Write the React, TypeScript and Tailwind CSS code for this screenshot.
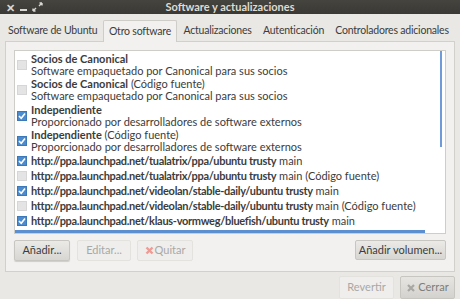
import React from "react";

const rows2 = [
  { b: "Socios de Canonical", r: "", sub: "Software empaquetado por Canonical para sus socios", c: false },
  { b: "Socios de Canonical", r: " (Código fuente)", sub: "Software empaquetado por Canonical para sus socios", c: false },
  { b: "Independiente", r: "", sub: "Proporcionado por desarrolladores de software externos", c: true },
  { b: "Independiente", r: " (Código fuente)", sub: "Proporcionado por desarrolladores de software externos", c: true },
];
const rows1 = [
  { b: "http://ppa.launchpad.net/tualatrix/ppa/ubuntu trusty", r: " main", c: true },
  { b: "http://ppa.launchpad.net/tualatrix/ppa/ubuntu trusty", r: " main (Código fuente)", c: false },
  { b: "http://ppa.launchpad.net/videolan/stable-daily/ubuntu trusty", r: " main", c: true },
  { b: "http://ppa.launchpad.net/videolan/stable-daily/ubuntu trusty", r: " main (Código fuente)", c: false },
  { b: "http://ppa.launchpad.net/klaus-vormweg/bluefish/ubuntu trusty", r: " main", c: true },
];

function Check({ c }: { c: boolean }) {
  if (!c)
    return <div className="w-[10px] h-[10px] shrink-0 bg-[#e4e4e4] border border-[#d6d6d6]" />;
  return (
    <div className="w-[10px] h-[10px] shrink-0 bg-[#4a8ccf] border border-[#3c78b8] flex items-center justify-center">
      <svg width="8" height="8" viewBox="0 0 8 8">
        <path d="M1 4 L3.2 6.2 L7 1.5" stroke="white" strokeWidth="1.6" fill="none" />
      </svg>
    </div>
  );
}

export default function App() {
  return (
    <div
      className="w-[460px] h-[299px] bg-[#e9e8e4] flex flex-col overflow-hidden text-[11px] text-[#3c3c3c] whitespace-nowrap"
      style={{ fontFamily: 'Lato, "Open Sans", sans-serif' }}
    >
      <div className="h-[14px] bg-gradient-to-b from-[#45443f] to-[#3a3935] flex items-center relative shrink-0">
        <div className="flex items-center gap-[5px] pl-[6px] text-[#d8d7d3] relative z-10">
          <span className="text-[11px] font-bold leading-none">✕</span>
          <span className="w-[7px] h-[2px] bg-[#d8d7d3] mt-[5px]" />
          <svg width="11" height="10" viewBox="0 0 11 10">
            <path d="M1 9 L4 6 M1 9 L1 6.5 M1 9 L3.5 9 M10 1 L7 4 M10 1 L7.5 1 M10 1 L10 3.5" stroke="#d8d7d3" strokeWidth="1.4" fill="none" />
          </svg>
        </div>
        <div className="absolute left-0 right-0 text-center font-bold text-[11px] leading-[14px] text-[#dfdbd2]">
          Software y actualizaciones
        </div>
      </div>
      <div className="flex items-end h-[27px] pl-[5px] pt-[6px] shrink-0 text-[10.5px] tracking-[-0.2px]">
        <div className="w-[98px] pl-[3px] h-[21px] flex items-center">Software de Ubuntu</div>
        <div className="w-[74px] h-[22px] flex items-center justify-center bg-[#f2f1ef] border border-[#cfcdc8] border-b-0 rounded-t-[2px] relative top-[1px]">
          Otro software
        </div>
        <div className="w-[81px] h-[21px] flex items-center justify-center">Actualizaciones</div>
        <div className="w-[71px] h-[21px] flex items-center justify-center">Autenticación</div>
        <div className="w-[126px] h-[21px] flex items-center justify-center">Controladores adicionales</div>
      </div>
      <div className="mx-[5px] h-[231px] border border-[#d2d0cb] bg-[#f2f1ef] flex flex-col px-[8px] pt-[8px] shrink-0">
        <div className="h-[184px] bg-white border border-[#cfcdc8] relative overflow-hidden">
          <div className="absolute right-[3px] top-0 w-[2px] h-[96px] bg-[#6f9bd8]" />
          <div className="flex flex-col pt-[1px]">
            {rows2.map((r, i) => (
              <div key={i} className="flex items-center h-[25.5px] pl-[2px] gap-[4px]">
                <Check c={r.c} />
                <div className="flex flex-col leading-[12px]">
                  <div>
                    <span className="font-bold">{r.b}</span>
                    {r.r}
                  </div>
                  <div>{r.sub}</div>
                </div>
              </div>
            ))}
            {rows1.map((r, i) => (
              <div key={i} className="flex items-center h-[14.8px] pl-[2px] gap-[4px] leading-[12px]">
                <Check c={r.c} />
                <div>
                  <span className="font-bold tracking-[-0.3px]">{r.b}</span>
                  {r.r}
                </div>
              </div>
            ))}
          </div>
          <div className="absolute left-0 bottom-0 w-[410px] h-[3px] bg-[#5b8fd0]" />
        </div>
        <div className="flex items-center mt-[5px] h-[22px]">
          <div className="h-[21px] w-[56px] flex items-center justify-center border border-[#c8c6c1] rounded-[2px] bg-gradient-to-b from-[#ebeae7] to-[#d7d6d2] shadow-[0_1px_1px_rgba(0,0,0,0.15)]">
            Añadir...
          </div>
          <div className="ml-[7px] h-[21px] w-[54px] flex items-center justify-center border border-[#e3e2df] rounded-[2px] bg-[#efeeec] text-[#a9a8a5]">
            Editar...
          </div>
          <div className="ml-[6px] h-[21px] w-[56px] flex items-center justify-center gap-[1px] border border-[#e3e2df] rounded-[2px] bg-[#efeeec] text-[#a9a8a5]">
            <svg width="9" height="9" viewBox="0 0 9 9">
              <path d="M1.5 1.5 L7.5 7.5 M7.5 1.5 L1.5 7.5" stroke="#ee9b95" strokeWidth="2.4" />
            </svg>
            Quitar
          </div>
          <div className="ml-auto h-[20px] w-[91px] flex items-center justify-center border border-[#c8c6c1] rounded-[2px] bg-gradient-to-b from-[#ebeae7] to-[#d7d6d2]">
            Añadir volumen...
          </div>
        </div>
      </div>
      <div className="flex justify-end items-center pr-[5px] mt-[4px] gap-[6px]">
        <div className="h-[23px] w-[55px] flex items-center justify-center border border-[#e3e2df] rounded-[2px] bg-[#efeeec] text-[#a9a8a5]">
          Revertir
        </div>
        <div className="h-[23px] w-[55px] flex items-center justify-center gap-[2px] border border-[#c8c6c1] rounded-[2px] bg-gradient-to-b from-[#e6e5e2] to-[#d3d2ce] text-[#7e7d7a]">
          <svg width="10" height="10" viewBox="0 0 10 10">
            <path d="M2 2 L8 8 M8 2 L2 8" stroke="#a8a7a3" strokeWidth="2.2" />
          </svg>
          Cerrar
        </div>
      </div>
    </div>
  );
}
